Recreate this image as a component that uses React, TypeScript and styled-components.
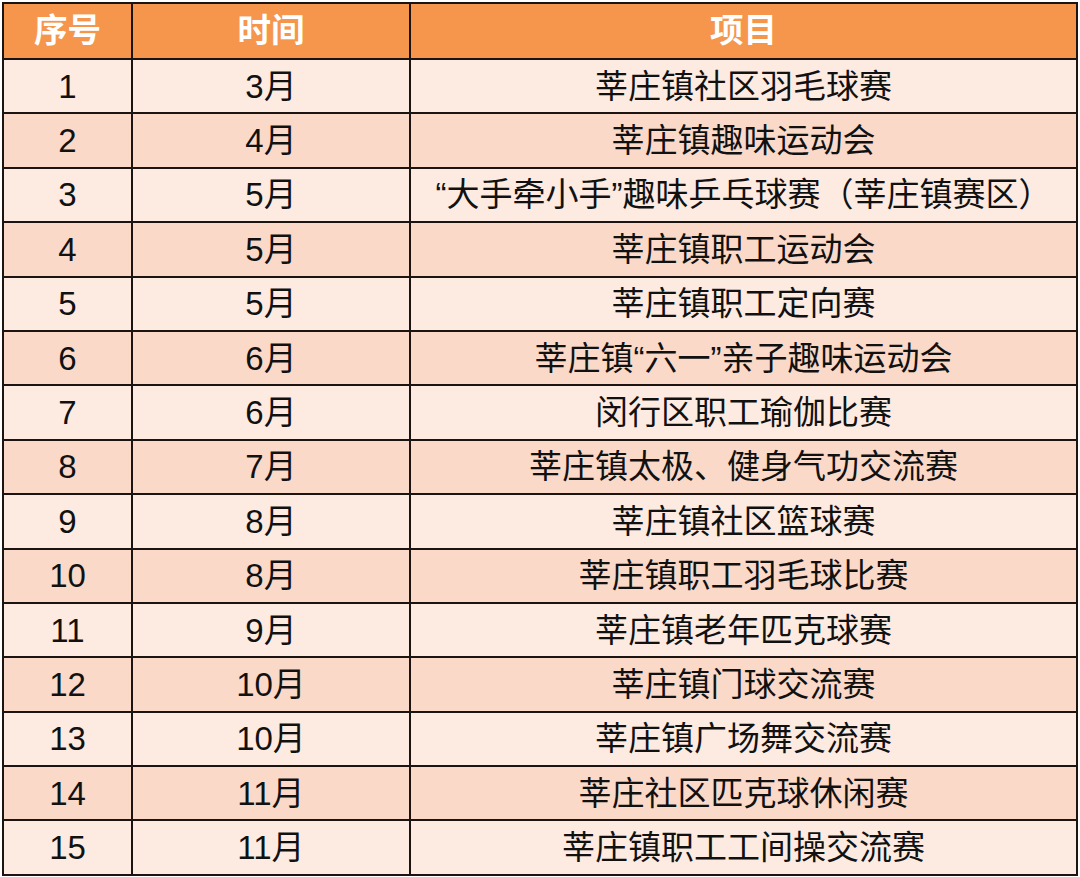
import React from "react";
import styled, { createGlobalStyle } from "styled-components";

const Global = createGlobalStyle`
  html, body { margin: 0; padding: 0; background: #ffffff; }
  body { font-family: "Liberation Sans", "Noto Sans CJK SC", sans-serif; }
`;

const Page = styled.div`
  padding: 2px;
  width: 1076px;
`;

const Table = styled.table`
  width: 1076px;
  border-collapse: collapse;
  table-layout: fixed;
  border: 2px solid #1c1410;
`;

const Th = styled.th`
  height: 54px;
  background: #f5964c;
  color: #ffffff;
  font-family: "Liberation Sans", "Noto Sans CJK SC", sans-serif;
  font-weight: 700;
  font-size: 33.5px;
  line-height: 1;
  text-align: center;
  border: 2px solid #1c1410;
  padding: 0;
`;

const Tr = styled.tr<{ $alt: boolean }>`
  background: ${(p) => (p.$alt ? "#fad9c9" : "#fdebe2")};
`;

const Td = styled.td`
  height: 52.4px;
  padding: 0;
  text-align: center;
  color: #111;
  font-family: "Liberation Sans", "Noto Sans CJK SC", sans-serif;
  font-size: 33px;
  line-height: 1;
  border: 2px solid #1c1410;
  white-space: nowrap;
`;

const Item = styled(Td)`
  font-size: 33px;
`;

const rows: [string, string][] = [
  ["3月", "莘庄镇社区羽毛球赛"],
  ["4月", "莘庄镇趣味运动会"],
  ["5月", "“大手牵小手”趣味乒乓球赛（莘庄镇赛区）"],
  ["5月", "莘庄镇职工运动会"],
  ["5月", "莘庄镇职工定向赛"],
  ["6月", "莘庄镇“六一”亲子趣味运动会"],
  ["6月", "闵行区职工瑜伽比赛"],
  ["7月", "莘庄镇太极、健身气功交流赛"],
  ["8月", "莘庄镇社区篮球赛"],
  ["8月", "莘庄镇职工羽毛球比赛"],
  ["9月", "莘庄镇老年匹克球赛"],
  ["10月", "莘庄镇门球交流赛"],
  ["10月", "莘庄镇广场舞交流赛"],
  ["11月", "莘庄社区匹克球休闲赛"],
  ["11月", "莘庄镇职工工间操交流赛"],
];

export default function App() {
  return (
    <Page>
      <Global />
      <Table>
        <colgroup>
          <col style={{ width: 129 }} />
          <col style={{ width: 278 }} />
          <col />
        </colgroup>
        <thead>
          <tr>
            <Th>序号</Th>
            <Th>时间</Th>
            <Th>项目</Th>
          </tr>
        </thead>
        <tbody>
          {rows.map(([month, item], i) => (
            <Tr key={i} $alt={i % 2 === 1}>
              <Td>{i + 1}</Td>
              <Td>{month}</Td>
              <Item>{item}</Item>
            </Tr>
          ))}
        </tbody>
      </Table>
    </Page>
  );
}
